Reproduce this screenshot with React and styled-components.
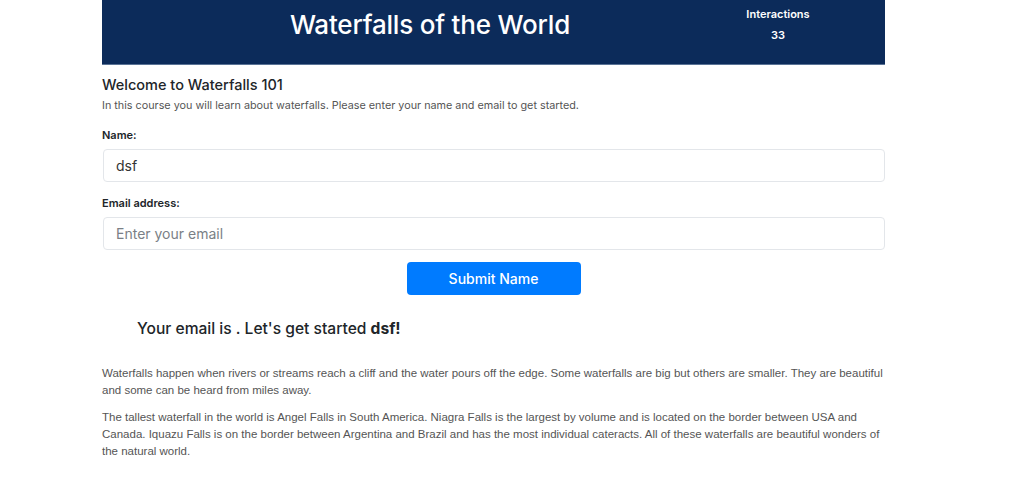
import React from "react";
import styled, { createGlobalStyle } from "styled-components";

const Global = createGlobalStyle`
  html, body { margin: 0; padding: 0; background: #fff; }
  body { font-family: Inter, "Liberation Sans", sans-serif; color: #212529; }
`;

const Page = styled.div`
  width: 783px;
  margin-left: 102px;
`;

const Header = styled.header`
  height: 64px;
  background: #0c2b5a;
  border-bottom: 1px solid #5a7396;
  display: flex;
  align-items: flex-start;
  padding: 0 59px 0 28px;
  color: #fff;
`;

const Title = styled.h1`
  flex: 1;
  margin: 0;
  padding-top: 8px;
  text-align: center;
  font-size: 26px;
  font-weight: 500;
  line-height: 34px;
  letter-spacing: -0.2px;
`;

const Counter = styled.div`
  width: 96px;
  padding-top: 4px;
  text-align: center;
  font-size: 11px;
  font-weight: 600;
  line-height: 21px;
`;

const Body = styled.main`
  padding-top: 10px;
`;

const Heading = styled.h2`
  margin: 0;
  font-size: 14.5px;
  font-weight: 500;
  line-height: 20px;
`;

const Lead = styled.p`
  margin: 2px 0 0;
  font-size: 10.8px;
  line-height: 18px;
  color: #555;
`;

const Label = styled.label`
  display: block;
  margin-top: ${(p) => p.$top}px;
  font-size: 11px;
  font-weight: 600;
  line-height: 16px;
`;

const Input = styled.input`
  display: block;
  box-sizing: border-box;
  width: 782px;
  height: 33px;
  margin: 6px 0 0 1px;
  padding: 0 12px;
  border: 1px solid #e3e6ea;
  border-radius: 4px;
  font-family: inherit;
  font-size: 14px;
  color: #333;
  outline: none;
  &::placeholder { color: #7a7f86; }
`;

const ButtonRow = styled.div`
  display: flex;
  justify-content: center;
  margin-top: 12px;
`;

const Button = styled.button`
  width: 174px;
  height: 33px;
  border: none;
  border-radius: 4px;
  background: #007bff;
  color: #fff;
  font-family: inherit;
  font-size: 14px;
  font-weight: 500;
  cursor: pointer;
`;

const Greeting = styled.p`
  margin: 23px 0 0 35px;
  font-size: 15.6px;
  font-weight: 500;
  line-height: 22px;
  color: #212529;
  b { font-weight: 700; }
`;

const Para = styled.p`
  margin: ${(p) => p.$top}px 0 0;
  font-family: "Liberation Sans", Arial, sans-serif;
  font-size: 11.5px;
  line-height: 17px;
  color: #555;
  letter-spacing: 0;
`;

export default function App() {
  return (
    <>
      <Global />
      <Page>
        <Header>
          <Title>Waterfalls of the World</Title>
          <Counter>
            <div>Interactions</div>
            <div>33</div>
          </Counter>
        </Header>
        <Body>
          <Heading>Welcome to Waterfalls 101</Heading>
          <Lead>
            In this course you will learn about waterfalls. Please enter your name and email to get started.
          </Lead>
          <Label $top={12}>Name:</Label>
          <Input defaultValue="dsf" />
          <Label $top={13}>Email address:</Label>
          <Input placeholder="Enter your email" />
          <ButtonRow>
            <Button>Submit Name</Button>
          </ButtonRow>
          <Greeting>
            Your email is . Let's get started <b>dsf!</b>
          </Greeting>
          <Para $top={25}>
            Waterfalls happen when rivers or streams reach a cliff and the water pours off the edge. Some waterfalls are big but others are smaller. They are beautiful and some can be heard from miles away.
          </Para>
          <Para $top={10}>
            The tallest waterfall in the world is Angel Falls in South America. Niagra Falls is the largest by volume and is located on the border between USA and Canada. Iquazu Falls is on the border between Argentina and Brazil and has the most individual cateracts. All of these waterfalls are beautiful wonders of the natural world.
          </Para>
        </Body>
      </Page>
    </>
  );
}
